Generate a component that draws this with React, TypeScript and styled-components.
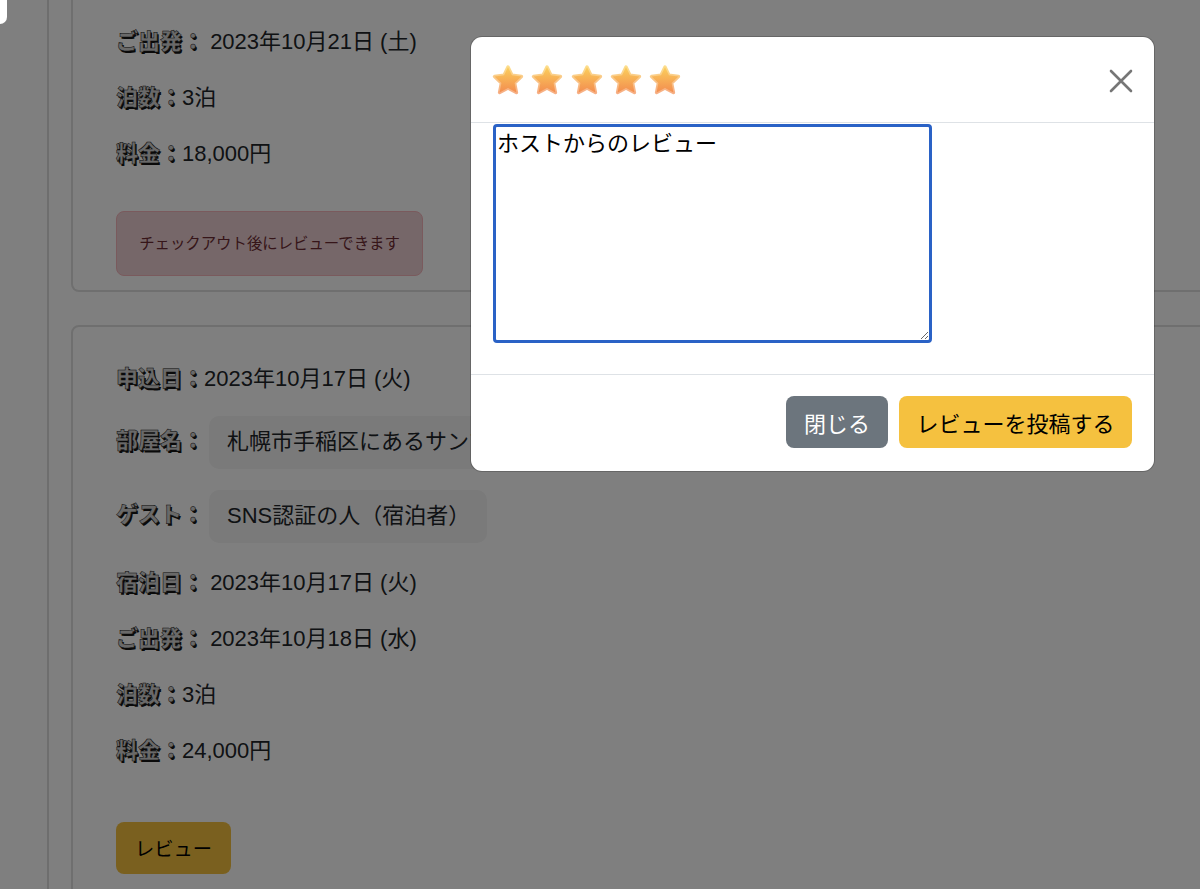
import { FC } from 'react';
import styled, { createGlobalStyle } from 'styled-components';

const GlobalStyle = createGlobalStyle`
  html, body {
    margin: 0;
    padding: 0;
    height: 889px;
    overflow: hidden;
    background: #fff;
    color: #212529;
    font-family: "Liberation Sans", "Noto Sans CJK JP", sans-serif;
    font-size: 22px;
  }
  * { box-sizing: border-box; }
`;

const Page = styled.div`
  height: 889px;
  overflow: hidden;
  padding-left: 47px;
`;

const Column = styled.main`
  width: 1400px;
  height: 889px;
  border-left: 2px solid #dcdcdc;
  padding-left: 22px;
`;

const Card = styled.section<{ $cut?: boolean }>`
  border: 2px solid #dedede;
  border-top-width: ${(p) => (p.$cut ? 0 : 2)}px;
  border-radius: ${(p) => (p.$cut ? '0 0 8px 8px' : '8px')};
  padding: ${(p) => (p.$cut ? '26px 43px 14px' : '36px 43px 30px')};
  margin-bottom: 33px;
`;

const Label = styled.span`
  font-family: "Noto Sans CJK JP", sans-serif;
  font-weight: 900;
  line-height: 26px;
  padding-bottom: 6px;
  color: #d2d2d2;
  -webkit-text-stroke: 0.5px #141414;
  text-shadow: 1.5px 1.5px 0 #141414;
`;

const Row = styled.div`
  display: flex;
  align-items: center;
  height: 32px;
  line-height: 32px;
  margin-bottom: 24px;
  white-space: pre;
`;

const ChipRow = styled(Row)`
  height: auto;
  margin: -3px 0 24px;

  ${Label} {
    padding-bottom: 10px;
  }
`;

const Chip = styled.span`
  height: 53px;
  line-height: 52px;
  padding: 0 17px 0 18px;
  margin-left: 5px;
  border-radius: 10px;
  background: #f4f4f4;
`;

const Notice = styled.div`
  width: 307px;
  height: 65px;
  margin-top: 41px;
  border: 1px solid #f5b4bb;
  border-radius: 8px;
  background: #eccfd2;
  color: #6d2b33;
  font-size: 15.4px;
  line-height: 63px;
  text-align: center;
  white-space: nowrap;
`;

const Button = styled.button<{ $tone: 'warning' | 'secondary'; $small?: boolean }>`
  height: 52px;
  padding: 0 ${(p) => (p.$small ? 19 : 17.5)}px;
  border: 0;
  border-radius: 8px;
  font-family: inherit;
  font-size: ${(p) => (p.$small ? 19.25 : 22)}px;
  background: ${(p) => (p.$tone === 'warning' ? '#f5c13f' : '#6c757d')};
  color: ${(p) => (p.$tone === 'warning' ? '#000' : '#fff')};
`;

const CloseAction = styled(Button)`
  padding: 0 18px;
`;

const ReviewButton = styled(Button)`
  display: block;
  margin-top: 55px;
`;

const Overlay = styled.div`
  position: fixed;
  inset: 0;
  display: flex;
  justify-content: flex-end;
  align-items: flex-start;
  padding: 37px 46px 0 0;
  background: rgba(0, 0, 0, 0.5);
`;

const CornerTab = styled.div`
  position: fixed;
  top: 0;
  left: 0;
  width: 7px;
  height: 24px;
  background: #fff;
  border-radius: 0 0 8px 0;
`;

const Modal = styled.div`
  width: 683px;
  height: 434px;
  background: #fff;
  border-radius: 11px;
  box-shadow: 0 0 0 1px rgba(0, 0, 0, 0.2);
  display: flex;
  flex-direction: column;
`;

const ModalHeader = styled.header`
  height: 86px;
  display: flex;
  align-items: center;
  justify-content: space-between;
  padding: 2px 20px 0 21px;
  border-bottom: 1px solid #dee2e6;
`;

const Stars = styled.div`
  display: flex;
  gap: 7.3px;
`;

const CloseButton = styled.button`
  width: 26px;
  height: 26px;
  padding: 0;
  border: 0;
  background: none;
  color: #767676;
`;

const ModalBody = styled.div`
  padding: 1px 22px 31px 22px;
  border-bottom: 1px solid #dee2e6;
`;

const ReviewText = styled.textarea`
  display: block;
  width: 439px;
  height: 219px;
  padding: 0 1px;
  border: 3px solid #2a62c6;
  border-radius: 4px;
  outline: none;
  font-family: inherit;
  font-size: 22px;
  line-height: 33px;
  color: #000;
`;

const ModalFooter = styled.footer`
  display: flex;
  justify-content: flex-end;
  gap: 11px;
  padding: 21px 22px 0;
`;

const Star: FC<{ id: string }> = ({ id }) => (
  <svg width="32" height="31" viewBox="1 1 30 29">
    <defs>
      <linearGradient id={id} x1="0" y1="0" x2="0" y2="1">
        <stop offset="0" stopColor="#fbcf5c" />
        <stop offset="1" stopColor="#f38d50" />
      </linearGradient>
    </defs>
    <path
      d="M16 2.8 L19.7 10.6 L28.6 11.8 L22.2 17.9 L23.9 26.8 L16 22.5 L8.1 26.8 L9.8 17.9 L3.4 11.8 L12.3 10.6 Z"
      fill={`url(#${id})`}
      stroke={`url(#${id})`}
      strokeOpacity="0.7"
      strokeWidth="3.2"
      strokeLinejoin="round"
    />
  </svg>
);

const App: FC = () => {
  return (
    <>
      <GlobalStyle />
      <Page>
        <Column>
          <Card $cut>
            <Row>
              <Label>ご出発：</Label> 2023年10月21日 (土)
            </Row>
            <Row>
              <Label>泊数：</Label>3泊
            </Row>
            <Row>
              <Label>料金：</Label>18,000円
            </Row>
            <Notice>チェックアウト後にレビューできます</Notice>
          </Card>
          <Card>
            <Row>
              <Label>申込日：</Label>2023年10月17日 (火)
            </Row>
            <ChipRow>
              <Label>部屋名：</Label>
              <Chip>札幌市手稲区にあるサンプルルーム</Chip>
            </ChipRow>
            <ChipRow>
              <Label>ゲスト：</Label>
              <Chip>SNS認証の人（宿泊者）</Chip>
            </ChipRow>
            <Row>
              <Label>宿泊日：</Label> 2023年10月17日 (火)
            </Row>
            <Row>
              <Label>ご出発：</Label> 2023年10月18日 (水)
            </Row>
            <Row>
              <Label>泊数：</Label>3泊
            </Row>
            <Row>
              <Label>料金：</Label>24,000円
            </Row>
            <ReviewButton $tone="warning" $small>
              レビュー
            </ReviewButton>
          </Card>
        </Column>
      </Page>
      <Overlay>
        <Modal>
          <ModalHeader>
            <Stars>
              {[0, 1, 2, 3, 4].map((n) => (
                <Star key={n} id={`star-${n}`} />
              ))}
            </Stars>
            <CloseButton aria-label="閉じる">
              <svg width="26" height="26" viewBox="0 0 26 26">
                <path
                  d="M3 3 L23 23 M23 3 L3 23"
                  stroke="currentColor"
                  strokeWidth="2.6"
                  strokeLinecap="round"
                />
              </svg>
            </CloseButton>
          </ModalHeader>
          <ModalBody>
            <ReviewText defaultValue="ホストからのレビュー" />
          </ModalBody>
          <ModalFooter>
            <CloseAction $tone="secondary">閉じる</CloseAction>
            <Button $tone="warning">レビューを投稿する</Button>
          </ModalFooter>
        </Modal>
      </Overlay>
      <CornerTab />
    </>
  );
};

export default App;
